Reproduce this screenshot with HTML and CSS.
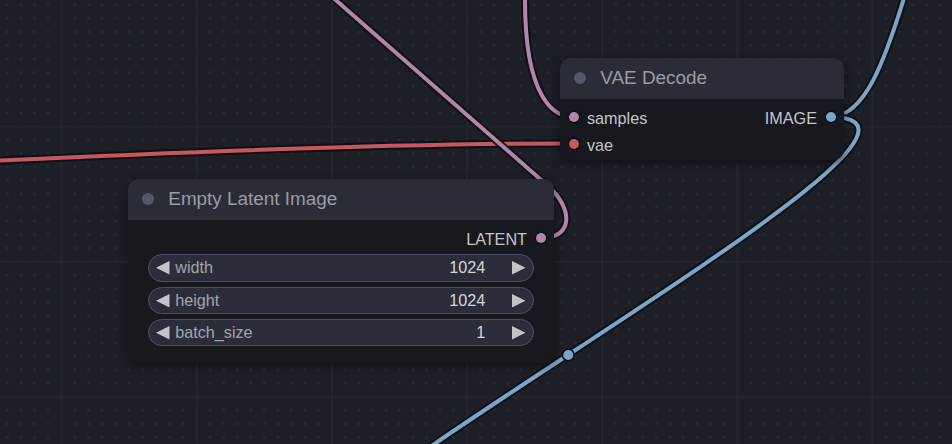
FILE: index.html
```html
<!DOCTYPE html>
<html>
<head>
<meta charset="utf-8">
<link rel="stylesheet" href="styles.css">
</head>
<body>
<div class="canvas">
  <svg class="graph" width="952" height="444" viewBox="0 0 952 444">
    <defs>
      <pattern id="minor" x="54.74" y="119.74" width="13.517" height="13.517" patternUnits="userSpaceOnUse">
        <path class="grid-dot" d="M5.26 6.76H8.26M6.76 5.26V8.26"/>
      </pattern>
      <pattern id="major" x="60.5" y="125.5" width="135.17" height="135.17" patternUnits="userSpaceOnUse">
        <rect class="grid-line" x="0" y="0" width="2" height="135.17"/>
        <rect class="grid-line" x="0" y="0" width="135.17" height="2"/>
      </pattern>
    </defs>
    <rect class="grid-bg" width="952" height="444"/>
    <rect width="952" height="444" fill="url(#minor)"/>
    <rect width="952" height="444" fill="url(#major)"/>
    <g class="links">
      <path class="link-border" d="M-10 160.9 C200 151 400 143.5 573 143.5"/>
      <path class="link link-red" d="M-10 160.9 C200 151 400 143.5 573 143.5"/>
      <path class="link-border" d="M525 -10 L525 0 C525 100 555 117 573 117"/>
      <path class="link link-pink" d="M525 -10 L525 0 C525 100 555 117 573 117"/>
      <path class="link-border" d="M541 238 C575 238 572 207 548 186 L330 -5"/>
      <path class="link link-pink" d="M541 238 C575 238 572 207 548 186 L330 -5"/>
      <path class="link-border" d="M830 117 C865 117 885 60 905 -5"/>
      <path class="link link-blue" d="M830 117 C865 117 885 60 905 -5"/>
      <path class="link-border" d="M830 117 C1030 117 106 593 306 593"/>
      <path class="link link-blue" d="M830 117 C1030 117 106 593 306 593"/>
      <circle class="link-center" cx="568.3" cy="355" r="5.8"/>
    </g>
  </svg>

  <div class="node node-vae">
    <div class="node-title">
      <span class="title-dot"></span>
      <span class="title-text">VAE Decode</span>
    </div>
    <div class="node-body">
      <div class="slot-rows">
        <div class="slot-col inputs">
          <div class="slot"><span class="dot dot-pink"></span><span class="slot-label">samples</span></div>
          <div class="slot"><span class="dot dot-red"></span><span class="slot-label">vae</span></div>
        </div>
        <div class="slot-col outputs">
          <div class="slot"><span class="slot-label">IMAGE</span><span class="dot dot-blue"></span></div>
        </div>
      </div>
    </div>
  </div>

  <div class="node node-latent">
    <div class="node-title">
      <span class="title-dot"></span>
      <span class="title-text">Empty Latent Image</span>
    </div>
    <div class="node-body">
      <div class="slot-rows">
        <div class="slot-col inputs"></div>
        <div class="slot-col outputs">
          <div class="slot"><span class="slot-label">LATENT</span><span class="dot dot-pink"></span></div>
        </div>
      </div>
      <div class="widgets">
        <div class="widget">
          <svg class="arrow" viewBox="0 0 13.5 13.5"><path d="M13.5 0L0 6.75L13.5 13.5Z"/></svg>
          <span class="w-label">width</span>
          <span class="w-value">1024</span>
          <svg class="arrow arrow-right" viewBox="0 0 13.5 13.5"><path d="M0 0L13.5 6.75L0 13.5Z"/></svg>
        </div>
        <div class="widget">
          <svg class="arrow" viewBox="0 0 13.5 13.5"><path d="M13.5 0L0 6.75L13.5 13.5Z"/></svg>
          <span class="w-label">height</span>
          <span class="w-value">1024</span>
          <svg class="arrow arrow-right" viewBox="0 0 13.5 13.5"><path d="M0 0L13.5 6.75L0 13.5Z"/></svg>
        </div>
        <div class="widget">
          <svg class="arrow" viewBox="0 0 13.5 13.5"><path d="M13.5 0L0 6.75L13.5 13.5Z"/></svg>
          <span class="w-label">batch_size</span>
          <span class="w-value">1</span>
          <svg class="arrow arrow-right" viewBox="0 0 13.5 13.5"><path d="M0 0L13.5 6.75L0 13.5Z"/></svg>
        </div>
      </div>
    </div>
  </div>
</div>
</body>
</html>
```
FILE: styles.css
```css
html, body {
  margin: 0;
  padding: 0;
  background: #1c1f26;
}

body {
  width: 952px;
  height: 444px;
  overflow: hidden;
  font-family: "Liberation Sans", Arial, sans-serif;
}

.canvas {
  position: relative;
  width: 952px;
  height: 444px;
  overflow: hidden;
  background: #1c1f26;
}

.graph {
  position: absolute;
  left: 0;
  top: 0;
  display: block;
}

.grid-bg { fill: #1c1f26; }
.grid-dot { stroke: #2a2d35; stroke-width: 1; fill: none; }
.grid-line { fill: #23262d; }

.links path { fill: none; stroke-linecap: round; }
.link-border { stroke: #0d0e11; stroke-width: 8; stroke-opacity: 0.85; }
.link { stroke-width: 4; }
.link-red { stroke: #c35861; }
.link-pink { stroke: #b386a9; }
.link-blue { stroke: #7aa5cb; }
.link-center { fill: #7aa5cb; stroke: #0d0e11; stroke-width: 1.5; }

.node {
  position: absolute;
  display: flex;
  flex-direction: column;
  background: #17191e;
  border-radius: 10px;
  box-shadow: 0 3px 10px rgba(0, 0, 0, 0.45);
}

.node-vae {
  left: 560px;
  top: 58px;
  width: 284px;
  height: 102px;
}

.node-latent {
  left: 128px;
  top: 179px;
  width: 426px;
  height: 184px;
}

.node-title {
  flex: none;
  height: 40.5px;
  background: #2a2d36;
  border-radius: 10px 10px 0 0;
  display: flex;
  align-items: center;
  padding-left: 13.7px;
  gap: 14.6px;
}

.title-dot {
  width: 12px;
  height: 12px;
  border-radius: 50%;
  background: #525868;
}

.title-text {
  font-size: 18.9px;
  color: #9a9ca1;
}

.node-body {
  padding-top: 5.4px;
  display: flex;
  flex-direction: column;
}

.slot-rows {
  display: flex;
  justify-content: space-between;
}

.slot-col {
  display: flex;
  flex-direction: column;
}

.slot {
  height: 27px;
  display: flex;
  align-items: center;
  gap: 8.5px;
  font-size: 16.2px;
  color: #c4c5c9;
}

.slot-label {
  padding-top: 1.6px;
}

.inputs .slot { padding-left: 8.5px; }
.outputs .slot { padding-right: 8.5px; justify-content: flex-end; }

.dot {
  width: 10px;
  height: 10px;
  border-radius: 50%;
  box-shadow: 0 0 0 1.5px #0d0e11;
}

.dot-pink { background: #b386a9; }
.dot-red { background: #c35861; }
.dot-blue { background: #7aa5cb; }

.widgets {
  display: flex;
  flex-direction: column;
  gap: 5px;
  padding: 2.4px 20.25px 0;
}

.widget {
  height: 27.4px;
  box-sizing: border-box;
  border: 1px solid #4b5262;
  border-radius: 14px;
  background: #2b2e38;
  display: flex;
  align-items: center;
  font-size: 16.2px;
}

.arrow {
  width: 13.5px;
  height: 13.5px;
  flex: none;
  margin-left: 7.1px;
  fill: #c3c4c8;
}

.arrow-right {
  margin-left: 27px;
  margin-right: 7.1px;
}

.w-label {
  margin-left: 5.4px;
  color: #a3a5aa;
}

.w-value {
  margin-left: auto;
  color: #d4d5d8;
}
```
